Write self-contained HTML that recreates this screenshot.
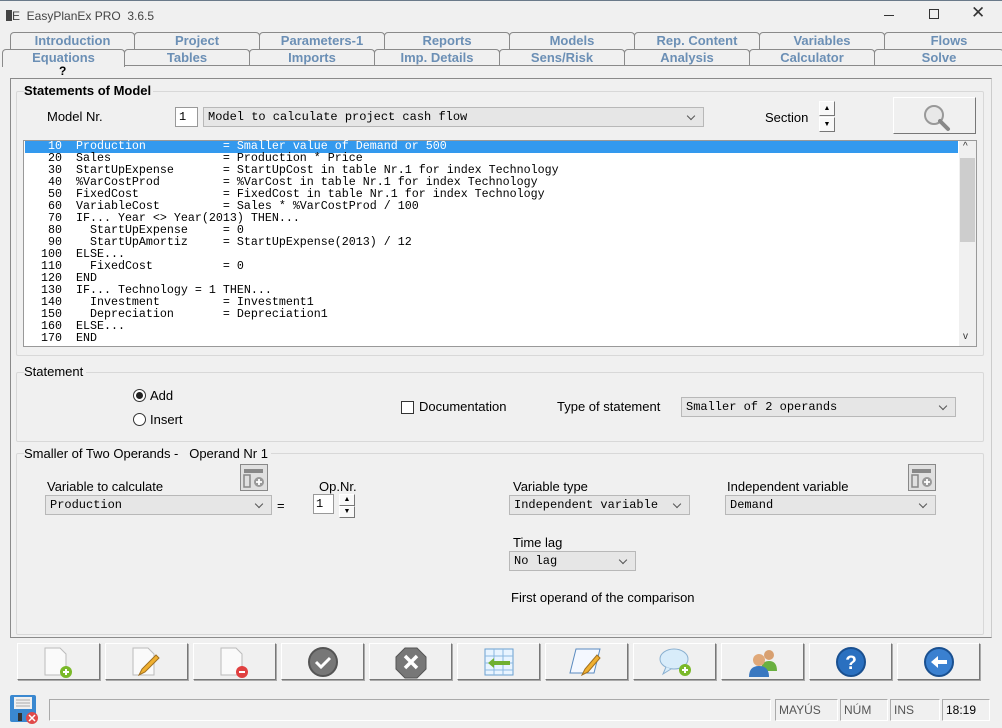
<!DOCTYPE html>
<html><head><meta charset="utf-8"><style>
*{box-sizing:border-box;margin:0;padding:0}
body{width:1002px;height:727px;background:#f0f0f0;font-family:"Liberation Sans",sans-serif;font-size:13px;color:#000;position:relative;overflow:hidden}
.a{position:absolute}
.tab{position:absolute;height:17px;border:1px solid #8a8a8a;border-bottom:none;border-radius:4px 4px 0 0;background:#f0f0f0;color:#6b8fb5;font-weight:bold;font-size:13px;text-align:center;line-height:16px}
.mono{font-family:"Liberation Mono",monospace}
.combo{position:absolute;height:20px;background:#e6e6e6;border:1px solid #b8b8b8;font-family:"Liberation Mono",monospace;font-size:12px;line-height:18px;padding-left:4px}
.combo:after{content:"";position:absolute;right:9px;top:5px;width:5px;height:5px;border-right:1px solid #555;border-bottom:1px solid #555;transform:rotate(45deg)}
.grp{position:absolute;border:1px solid #d8d8d8;border-radius:2px}
.btn{position:absolute;top:643px;width:83px;height:37px;background:#f0f0f0;border:1px solid #fff;border-right-color:#777;border-bottom-color:#777;box-shadow:1px 1px 0 #aaa}
.spin{position:absolute;width:16px;height:15px;background:#f8f8f8;border:1px solid #fff;border-right-color:#777;border-bottom-color:#777;font-size:7px;line-height:13px;text-align:center}
.stat{position:absolute;top:699px;height:22px;border:1px solid #aaa;border-right-color:#fff;border-bottom-color:#fff;font-size:12px;color:#555;line-height:20px;padding-left:3px}
pre{font-family:"Liberation Mono",monospace;font-size:11.66px;line-height:12px}
</style></head><body>
<div class="a" style="left:0;top:0;width:1002px;height:1px;background:#6a7a8a"></div>
<div class="a" style="left:6px;top:9px;font-size:12px;color:#444"><span style="display:inline-block;width:6px;height:11px;background:#444;vertical-align:-1px"></span>E&nbsp; EasyPlanEx PRO&nbsp; 3.6.5</div>
<div class="a" style="left:884px;top:15px;width:10px;height:1px;background:#333"></div>
<div class="a" style="left:929px;top:9px;width:10px;height:10px;border:1px solid #333"></div>
<div class="a" style="left:971px;top:3px;font-size:17px;color:#333">✕</div>

<div class="tab" style="left:10px;top:32px;width:125px">Introduction</div>
<div class="tab" style="left:134px;top:32px;width:126px">Project</div>
<div class="tab" style="left:259px;top:32px;width:126px">Parameters-1</div>
<div class="tab" style="left:384px;top:32px;width:126px">Reports</div>
<div class="tab" style="left:509px;top:32px;width:126px">Models</div>
<div class="tab" style="left:634px;top:32px;width:126px">Rep. Content</div>
<div class="tab" style="left:759px;top:32px;width:126px">Variables</div>
<div class="tab" style="left:884px;top:32px;width:130px">Flows</div>
<div class="tab" style="left:2px;top:49px;width:123px;height:18px;border-bottom:none">Equations</div>
<div class="tab" style="left:124px;top:49px;width:126px">Tables</div>
<div class="tab" style="left:249px;top:49px;width:126px">Imports</div>
<div class="tab" style="left:374px;top:49px;width:126px">Imp. Details</div>
<div class="tab" style="left:499px;top:49px;width:126px">Sens/Risk</div>
<div class="tab" style="left:624px;top:49px;width:126px">Analysis</div>
<div class="tab" style="left:749px;top:49px;width:126px">Calculator</div>
<div class="tab" style="left:874px;top:49px;width:130px">Solve</div>
<div class="a" style="left:125px;top:65px;width:877px;height:1px;background:#8a8a8a"></div>
<div class="a" style="left:59px;top:64px;font-weight:bold;font-size:12px">?</div>

<div class="a" style="left:10px;top:78px;width:982px;height:560px;border:1px solid #8a8a8a;border-right-color:#ccc"></div>
<div class="grp" style="left:16px;top:91px;width:968px;height:265px"></div>
<div class="a" style="left:24px;top:83px;font-weight:bold;font-size:13px;background:#f0f0f0;padding-right:2px">Statements of Model</div>
<div class="a" style="left:47px;top:109px">Model Nr.</div>
<div class="a mono" style="left:175px;top:107px;width:23px;height:20px;background:#fff;border:1px solid #999;padding-left:3px;line-height:18px;font-size:12px">1</div>
<div class="combo" style="left:203px;top:107px;width:501px">Model to calculate project cash flow</div>
<div class="a" style="left:765px;top:110px">Section</div>
<div class="spin" style="left:819px;top:101px">▲</div>
<div class="spin" style="left:819px;top:117px">▼</div>
<div class="a" style="left:893px;top:97px;width:83px;height:37px;border:1px solid #fff;border-right-color:#777;border-bottom-color:#777">
<svg width="83" height="37"><circle cx="40" cy="17" r="9" fill="#e8e8e8" stroke="#999" stroke-width="2"/><line x1="46" y1="23" x2="54" y2="31" stroke="#888" stroke-width="4" stroke-linecap="round"/></svg></div>

<div class="a" style="left:23px;top:140px;width:954px;height:207px;background:#fff;border:1px solid #999"></div>
<div class="a" style="left:25px;top:141px;width:933px;height:12px;background:#3399ee"></div>
<div class="a" style="left:959px;top:141px;width:17px;height:205px;background:#f0f0f0"></div>
<div class="a" style="left:960px;top:158px;width:15px;height:84px;background:#cdcdcd"></div>
<div class="a" style="left:963px;top:141px;font-size:10px;color:#333">^</div>
<div class="a" style="left:963px;top:331px;font-size:10px;color:#333">v</div>
<pre class="a" style="left:41px;top:140px"><span style="color:#fff"> 10  Production           = Smaller value of Demand or 500</span>
 20  Sales                = Production * Price
 30  StartUpExpense       = StartUpCost in table Nr.1 for index Technology
 40  %VarCostProd         = %VarCost in table Nr.1 for index Technology
 50  FixedCost            = FixedCost in table Nr.1 for index Technology
 60  VariableCost         = Sales * %VarCostProd / 100
 70  IF... Year &lt;&gt; Year(2013) THEN...
 80    StartUpExpense     = 0
 90    StartUpAmortiz     = StartUpExpense(2013) / 12
100  ELSE...
110    FixedCost          = 0
120  END
130  IF... Technology = 1 THEN...
140    Investment         = Investment1
150    Depreciation       = Depreciation1
160  ELSE...
170  END</pre>

<div class="grp" style="left:16px;top:372px;width:968px;height:70px"></div>
<div class="a" style="left:24px;top:364px;font-size:13px;background:#f0f0f0;padding-right:3px">Statement</div>
<div class="a" style="left:133px;top:389px;width:13px;height:13px;border-radius:50%;border:1px solid #333;background:#fff"><div style="margin:2px;width:7px;height:7px;border-radius:50%;background:#222"></div></div>
<div class="a" style="left:150px;top:388px;font-size:13px">Add</div>
<div class="a" style="left:133px;top:413px;width:13px;height:13px;border-radius:50%;border:1px solid #333;background:#fff"></div>
<div class="a" style="left:150px;top:412px;font-size:13px">Insert</div>
<div class="a" style="left:401px;top:401px;width:13px;height:13px;border:1px solid #333;background:#fff"></div>
<div class="a" style="left:419px;top:399px">Documentation</div>
<div class="a" style="left:557px;top:399px">Type of statement</div>
<div class="combo" style="left:681px;top:397px;width:275px">Smaller of 2 operands</div>

<div class="grp" style="left:16px;top:453px;width:968px;height:182px"></div>
<div class="a" style="left:24px;top:446px;font-size:13px;background:#f0f0f0;padding-right:3px">Smaller of Two Operands -&nbsp;&nbsp; Operand Nr 1</div>
<div class="a" style="left:47px;top:479px">Variable to calculate</div>
<div class="a" style="left:240px;top:464px;width:28px;height:27px;border:1px solid #888;background:#e0e0e0"><svg width="26" height="25"><rect x="3" y="4" width="19" height="4" fill="#888"/><rect x="3" y="10" width="6" height="12" fill="none" stroke="#888" stroke-width="1.5"/><circle cx="18" cy="17" r="5" fill="#999"/><path d="M15 17h6M18 14v6" stroke="#fff" stroke-width="1.8"/></svg></div>
<div class="combo" style="left:45px;top:495px;width:227px">Production</div>
<div class="a" style="left:277px;top:498px">=</div>
<div class="a" style="left:319px;top:479px">Op.Nr.</div>
<div class="a mono" style="left:313px;top:494px;width:21px;height:20px;background:#fff;border:1px solid #999;padding-left:2px;line-height:18px;font-size:12px">1</div>
<div class="spin" style="left:339px;top:494px;height:12px;line-height:10px">▲</div>
<div class="spin" style="left:339px;top:506px;height:12px;line-height:10px">▼</div>
<div class="a" style="left:513px;top:479px">Variable type</div>
<div class="combo" style="left:509px;top:495px;width:181px">Independent variable</div>
<div class="a" style="left:727px;top:479px">Independent variable</div>
<div class="a" style="left:908px;top:464px;width:28px;height:27px;border:1px solid #888;background:#e0e0e0"><svg width="26" height="25"><rect x="3" y="4" width="19" height="4" fill="#888"/><rect x="3" y="10" width="6" height="12" fill="none" stroke="#888" stroke-width="1.5"/><circle cx="18" cy="17" r="5" fill="#999"/><path d="M15 17h6M18 14v6" stroke="#fff" stroke-width="1.8"/></svg></div>
<div class="combo" style="left:725px;top:495px;width:211px">Demand</div>
<div class="a" style="left:513px;top:535px">Time lag</div>
<div class="combo" style="left:509px;top:551px;width:127px">No lag</div>
<div class="a" style="left:511px;top:590px">First operand of the comparison</div>

<div class="btn" style="left:17px"><svg width="83" height="37"><path d="M27 4h15l6 6v21H27z" fill="#fafafa" stroke="#bbb"/><circle cx="48" cy="28" r="6" fill="#7ab929"/><path d="M45 28h6M48 25v6" stroke="#fff" stroke-width="2"/></svg></div>
<div class="btn" style="left:105px"><svg width="83" height="37"><path d="M27 4h15l6 6v21H27z" fill="#fafafa" stroke="#bbb"/><path d="M33 31l3-6 14-14 3 3-14 14z" fill="#f0b030" stroke="#a07020"/></svg></div>
<div class="btn" style="left:193px"><svg width="83" height="37"><path d="M27 4h15l6 6v21H27z" fill="#fafafa" stroke="#bbb"/><circle cx="48" cy="28" r="6" fill="#e04040"/><path d="M45 28h6" stroke="#fff" stroke-width="2"/></svg></div>
<div class="btn" style="left:281px"><svg width="83" height="37"><circle cx="41" cy="18" r="14" fill="#777" stroke="#555" stroke-width="2"/><path d="M34 18l5 5 9-9" stroke="#fff" stroke-width="3" fill="none"/></svg></div>
<div class="btn" style="left:369px"><svg width="83" height="37"><path d="M35 4h12l9 9v12l-9 9H35l-9-9V13z" fill="#777" stroke="#555"/><path d="M35 12l12 12M47 12L35 24" stroke="#fff" stroke-width="3.5"/></svg></div>
<div class="btn" style="left:457px"><svg width="83" height="37"><rect x="27" y="5" width="28" height="26" fill="#e8f4ff" stroke="#6aa0d0"/><path d="M27 12h28M27 19h28M27 26h28M36 5v26M45 5v26" stroke="#8ab8e0"/><path d="M30 19l6-5v3h16v4H36v3z" fill="#70b030"/></svg></div>
<div class="btn" style="left:545px"><svg width="83" height="37"><path d="M30 5h24l-6 24H24z" fill="#f4f8ff" stroke="#5a8ac0"/><path d="M36 31l3-6 12-14 3 3-12 14z" fill="#f0b030" stroke="#a07020"/></svg></div>
<div class="btn" style="left:633px"><svg width="83" height="37"><ellipse cx="40" cy="15" rx="14" ry="10" fill="#d8ecfa" stroke="#8ab0d0"/><path d="M32 23l-3 7 8-5" fill="#d8ecfa" stroke="#8ab0d0"/><circle cx="51" cy="26" r="6" fill="#7ab929"/><path d="M48 26h6M51 23v6" stroke="#fff" stroke-width="2"/></svg></div>
<div class="btn" style="left:721px"><svg width="83" height="37"><circle cx="47" cy="11" r="5" fill="#d8a070"/><path d="M39 27q0-10 8-10t8 10z" fill="#6ab040"/><circle cx="37" cy="16" r="6" fill="#e0a878"/><path d="M27 33q0-11 10-11t10 11z" fill="#3a78c0"/></svg></div>
<div class="btn" style="left:809px"><svg width="83" height="37"><circle cx="41" cy="18" r="14" fill="#2a70c0" stroke="#1a5090" stroke-width="2"/><text x="41" y="25" text-anchor="middle" fill="#fff" font-size="19" font-weight="bold" font-family="Liberation Sans">?</text></svg></div>
<div class="btn" style="left:897px"><svg width="83" height="37"><circle cx="41" cy="18" r="14" fill="#3a80d0" stroke="#1a5090" stroke-width="2"/><path d="M33 18l7-6v4h9v4h-9v4z" fill="#fff"/></svg></div>

<div class="a" style="left:9px;top:694px;width:29px;height:31px"><svg width="29" height="31"><rect x="1" y="1" width="26" height="27" rx="2" fill="#3a88d0"/><rect x="5" y="3" width="18" height="12" fill="#f0f0f0"/><path d="M7 6h14M7 9h14M7 12h14" stroke="#aaa"/><rect x="9" y="19" width="4" height="8" fill="#333"/><circle cx="23" cy="24" r="6" fill="#e04a4a"/><path d="M20 21l6 6M26 21l-6 6" stroke="#fff" stroke-width="1.5"/></svg></div>
<div class="stat" style="left:49px;width:722px"></div>
<div class="stat" style="left:775px;width:63px">MAYÚS</div>
<div class="stat" style="left:840px;width:48px">NÚM</div>
<div class="stat" style="left:890px;width:50px">INS</div>
<div class="stat" style="left:942px;width:48px;color:#000">18:19</div>
</body></html>
